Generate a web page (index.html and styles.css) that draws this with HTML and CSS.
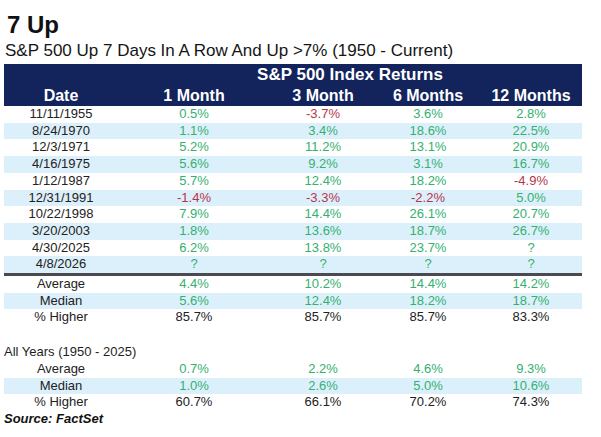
FILE: index.html
```html
<!DOCTYPE html>
<html>
<head>
<meta charset="utf-8">
<link rel="stylesheet" href="styles.css">
</head>
<body>
<div class="page">
  <h1 class="title">7 Up</h1>
  <div class="subtitle">S&amp;P 500 Up 7 Days In A Row And Up &gt;7% (1950 - Current)</div>
  <table class="returns">
    <colgroup>
      <col class="c1"><col class="c2"><col class="c3"><col class="c4"><col class="c5">
    </colgroup>
    <thead>
      <tr class="h1row"><th></th><th colspan="4">S&amp;P 500 Index Returns</th></tr>
      <tr class="h2row"><th>Date</th><th>1 Month</th><th>3 Month</th><th>6 Months</th><th>12 Months</th></tr>
    </thead>
    <tbody>
      <tr><td>11/11/1955</td><td class="g">0.5%</td><td class="r">-3.7%</td><td class="g">3.6%</td><td class="g">2.8%</td></tr>
      <tr class="s"><td>8/24/1970</td><td class="g">1.1%</td><td class="g">3.4%</td><td class="g">18.6%</td><td class="g">22.5%</td></tr>
      <tr><td>12/3/1971</td><td class="g">5.2%</td><td class="g">11.2%</td><td class="g">13.1%</td><td class="g">20.9%</td></tr>
      <tr class="s"><td>4/16/1975</td><td class="g">5.6%</td><td class="g">9.2%</td><td class="g">3.1%</td><td class="g">16.7%</td></tr>
      <tr><td>1/12/1987</td><td class="g">5.7%</td><td class="g">12.4%</td><td class="g">18.2%</td><td class="r">-4.9%</td></tr>
      <tr class="s"><td>12/31/1991</td><td class="r">-1.4%</td><td class="r">-3.3%</td><td class="r">-2.2%</td><td class="g">5.0%</td></tr>
      <tr><td>10/22/1998</td><td class="g">7.9%</td><td class="g">14.4%</td><td class="g">26.1%</td><td class="g">20.7%</td></tr>
      <tr class="s"><td>3/20/2003</td><td class="g">1.8%</td><td class="g">13.6%</td><td class="g">18.7%</td><td class="g">26.7%</td></tr>
      <tr><td>4/30/2025</td><td class="g">6.2%</td><td class="g">13.8%</td><td class="g">23.7%</td><td class="g">?</td></tr>
      <tr class="s last"><td>4/8/2026</td><td class="g">?</td><td class="g">?</td><td class="g">?</td><td class="g">?</td></tr>
      <tr class="first"><td>Average</td><td class="g">4.4%</td><td class="g">10.2%</td><td class="g">14.4%</td><td class="g">14.2%</td></tr>
      <tr class="s"><td>Median</td><td class="g">5.6%</td><td class="g">12.4%</td><td class="g">18.2%</td><td class="g">18.7%</td></tr>
      <tr><td>% Higher</td><td>85.7%</td><td>85.7%</td><td>85.7%</td><td>83.3%</td></tr>
      <tr class="spacer"><td colspan="5"></td></tr>
      <tr><td colspan="5" class="label">All Years (1950 - 2025)</td></tr>
      <tr><td>Average</td><td class="g">0.7%</td><td class="g">2.2%</td><td class="g">4.6%</td><td class="g">9.3%</td></tr>
      <tr class="s"><td>Median</td><td class="g">1.0%</td><td class="g">2.6%</td><td class="g">5.0%</td><td class="g">10.6%</td></tr>
      <tr><td>% Higher</td><td>60.7%</td><td>66.1%</td><td>70.2%</td><td>74.3%</td></tr>
    </tbody>
  </table>
  <div class="source">Source: FactSet</div>
</div>
</body>
</html>
```

FILE: styles.css
```css
html, body {
  margin: 0;
  padding: 0;
  background: #ffffff;
}

.page {
  padding-left: 4px;
  font-family: "Liberation Sans", Arial, sans-serif;
  color: #1e1e1e;
}

.title {
  margin: 12px 0 0 3px;
  font-size: 24px;
  line-height: 26px;
  font-weight: bold;
  color: #111111;
}

.subtitle {
  margin: 3px 0 0 1px;
  font-size: 17px;
  line-height: 20px;
  color: #151515;
}

.returns {
  margin-top: 3px;
  width: 578px;
  border-collapse: collapse;
  table-layout: fixed;
  font-size: 13px;
}

.c1 { width: 114px; }
.c2 { width: 152px; }
.c3 { width: 106px; }
.c4 { width: 104px; }
.c5 { width: 102px; }

.returns thead {
  background: #13235c;
  color: #ffffff;
}

.returns th {
  padding: 0;
  font-weight: bold;
  text-align: center;
  line-height: 17px;
}

.h1row th {
  font-size: 17px;
  height: 21px;
  vertical-align: middle;
}

.h2row th {
  font-size: 16px;
  vertical-align: bottom;
  padding-bottom: 2px;
  height: 19px;
}

.returns td {
  padding: 0;
  height: 16.7px;
  line-height: 16.7px;
  text-align: center;
  color: #222222;
}

.returns tr.s td {
  background: #dcf0fb;
}

.returns td.g { color: #34b070; }
.returns td.r { color: #b5354c; }

.returns tr.last td {
  border-bottom: 3px solid #4a4a4f;
}

.returns tr.spacer td {
  height: 18px;
}

.returns td.label {
  text-align: left;
  color: #1e1e1e;
}

.source {
  margin-top: 0;
  font-size: 13px;
  line-height: 16px;
  font-weight: bold;
  font-style: italic;
  color: #111111;
}
```
